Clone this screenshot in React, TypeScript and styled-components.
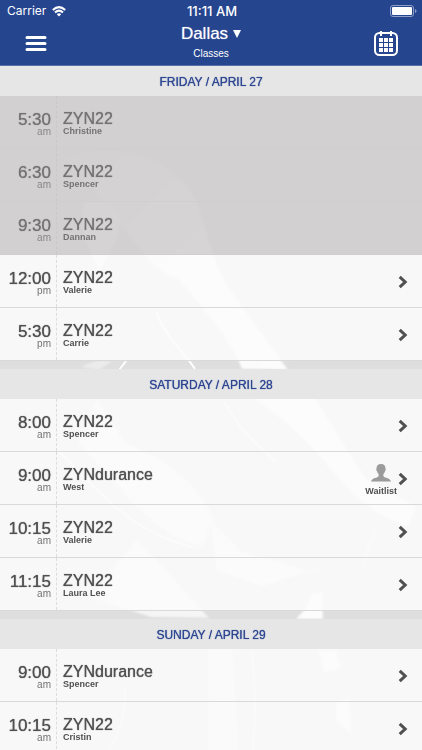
import React from "react";
import styled, { createGlobalStyle } from "styled-components";

const GlobalStyle = createGlobalStyle`
  * { box-sizing: border-box; }
  body {
    margin: 0;
    background: #dedede;
    font-family: "Liberation Sans", Arial, sans-serif;
    overflow-x: hidden;
  }
  button { font: inherit; color: inherit; border: 0; padding: 0; background: none; cursor: pointer; }
`;

const Screen = styled.div`
  position: relative;
  height: 100vh;
  overflow: hidden;
  display: flex;
  flex-direction: column;
`;

const Backdrop = styled.svg`
  position: absolute;
  inset: 0;
  width: 100%;
  height: 100%;
`;

const Header = styled.header`
  position: relative;
  flex: none;
  background: #26458f;
  border-bottom: 1px solid #5870aa;
  color: #fff;
`;

const StatusBar = styled.div`
  display: grid;
  grid-template-columns: 1fr auto 1fr;
  align-items: center;
  height: 22px;
  padding: 0 5px 0 7px;
  font-family: Inter, sans-serif;
  font-size: 12px;
  line-height: 22px;
`;

const Carrier = styled.div`
  display: flex;
  align-items: center;
  gap: 6px;
`;

const Clock = styled.time`
  font-size: 13px;
  font-weight: 500;
`;

const Battery = styled.svg`
  justify-self: end;
`;

const NavBar = styled.div`
  display: grid;
  grid-template-columns: 72px 1fr 72px;
  height: 43px;
`;

const IconButton = styled.button`
  display: flex;
  align-items: center;
  justify-content: center;
`;

const Titles = styled.div`
  display: flex;
  flex-direction: column;
  align-items: center;
`;

const CityButton = styled.button`
  display: flex;
  align-items: center;
  gap: 5px;
  font-size: 17px;
  line-height: 24px;
  text-shadow: 0 0 1px #ffffff99;
`;

const Subtitle = styled.span`
  font-size: 10px;
  line-height: 16px;
`;

const Schedule = styled.main`
  position: relative;
  flex: 1;
  min-height: 0;
  overflow: hidden;
  display: flex;
  flex-direction: column;
  gap: 8px;
`;

const Day = styled.section`
  flex: none;
`;

const DayTitle = styled.h2`
  margin: 0;
  height: 30px;
  background: #e6e6e6;
  color: #2c4691;
  font-size: 12px;
  font-weight: 400;
  line-height: 32px;
  text-align: center;
  text-shadow: 0 0 1px #2c4691;
`;

const List = styled.ul`
  list-style: none;
  margin: 0;
  padding: 0;
`;

const Row = styled.button<{ $past?: boolean }>`
  display: grid;
  grid-template-columns: 57px 1fr auto auto;
  width: 100%;
  height: 53px;
  text-align: left;
  color: ${(p) => (p.$past ? "#747374" : "#505050")};
  background: ${(p) => (p.$past ? "rgba(208, 206, 207, 0.88)" : "rgba(252, 252, 252, 0.88)")};
  border-bottom: 1px solid ${(p) => (p.$past ? "#d0cecf" : "#d9d9d9")};
`;

const TimeCell = styled.span<{ $past?: boolean }>`
  display: flex;
  flex-direction: column;
  align-items: flex-end;
  padding: 15px 5px 0 0;
  border-right: 1px dashed ${(p) => (p.$past ? "#cac8c9" : "#dcdcdc")};
`;

const Hour = styled.span`
  font-size: 17px;
  line-height: 17px;
  text-shadow: 0 0 1px currentColor;
`;

const Meridiem = styled.span`
  font-size: 10px;
  line-height: 8px;
  opacity: 0.8;
`;

const ClassCell = styled.span`
  display: flex;
  flex-direction: column;
  padding: 14px 0 0 6px;
`;

const ClassName = styled.span`
  font-size: 16px;
  line-height: 17px;
  text-shadow: 0 0 1px currentColor;
`;

const SmallLabel = styled.span`
  font-size: 9px;
  font-weight: 700;
  line-height: 8px;
`;

const Waitlist = styled.span`
  display: flex;
  flex-direction: column;
  align-items: center;
  gap: 5px;
  padding-top: 12px;
`;

const ArrowCell = styled.span`
  display: flex;
  align-items: center;
  padding: 2px 14px 0 1px;
`;

type Session = { time: string; half: string; name: string; coach: string; past?: boolean; waitlist?: boolean };

const days: { title: string; sessions: Session[] }[] = [
  {
    title: "FRIDAY / APRIL 27",
    sessions: [
      { time: "5:30", half: "am", name: "ZYN22", coach: "Christine", past: true },
      { time: "6:30", half: "am", name: "ZYN22", coach: "Spencer", past: true },
      { time: "9:30", half: "am", name: "ZYN22", coach: "Dannan", past: true },
      { time: "12:00", half: "pm", name: "ZYN22", coach: "Valerie" },
      { time: "5:30", half: "pm", name: "ZYN22", coach: "Carrie" },
    ],
  },
  {
    title: "SATURDAY / APRIL 28",
    sessions: [
      { time: "8:00", half: "am", name: "ZYN22", coach: "Spencer" },
      { time: "9:00", half: "am", name: "ZYNdurance", coach: "West", waitlist: true },
      { time: "10:15", half: "am", name: "ZYN22", coach: "Valerie" },
      { time: "11:15", half: "am", name: "ZYN22", coach: "Laura Lee" },
    ],
  },
  {
    title: "SUNDAY / APRIL 29",
    sessions: [
      { time: "9:00", half: "am", name: "ZYNdurance", coach: "Spencer" },
      { time: "10:15", half: "am", name: "ZYN22", coach: "Cristin" },
    ],
  },
];

const RiderBackdrop = () => (
  <Backdrop viewBox="0 0 422 750" preserveAspectRatio="xMidYMid slice" aria-hidden="true">
    <defs>
      <linearGradient id="torso" x1="0" y1="0" x2="1" y2="1">
        <stop offset="0" stopColor="#fff" stopOpacity="0.1" />
        <stop offset="0.5" stopColor="#fff" stopOpacity="0.8" />
        <stop offset="1" stopColor="#fff" stopOpacity="0.9" />
      </linearGradient>
      <filter id="soft"><feGaussianBlur stdDeviation="1" /></filter>
    </defs>
    <g filter="url(#soft)" fill="#fff">
      <path d="M65 158 C120 140 178 160 196 202 C207 229 212 262 230 290 L288 370 L242 369 C229 335 200 305 178 279 C143 269 119 210 65 158Z" fill="url(#torso)" />
      <path d="M84 203 C98 194 115 205 119 220 C121 233 110 253 99 270 C91 251 78 233 84 203Z" opacity="0.75" />
      <path d="M80 367 L98 360 L112 361 L99 370Z" opacity="0.4" />
      <path d="M97 400 L125 443 C164 457 195 482 213 517 L203 546 C169 540 145 515 124 493 L78 442Z" opacity="0.6" />
      <path d="M242 392 L313 396 C331 423 349 456 367 480 L416 507 L408 526 C366 513 346 485 330 468 C305 437 276 410 242 392Z" opacity="0.9" />
      <path d="M137 540 L209 618 L151 617 L90 597Z" opacity="0.7" />
      <path d="M211 521 L241 552 L305 570 L263 586 L217 570Z" opacity="0.7" />
      <path d="M296 619 L306 608 L312 594 L322 592 L323 619Z" opacity="0.9" />
      <path d="M209 650 L232 650 L238 750 L208 750Z" opacity="0.5" />
      <path d="M319 651 L335 650 L341 668 L324 672Z M336 703 L349 698 L351 733 L337 722Z" opacity="0.8" />
    </g>
    <g fill="none" stroke="#fff" strokeWidth="2">
      <path d="M157 313 C163 334 185 353 195 369" />
      <path d="M126 361 L119 370" />
      <path d="M224 402 C238 425 251 442 276 461" opacity="0.6" />
      <path d="M58 450 C98 490 127 530 192 547" opacity="0.6" />
      <path d="M377 527 Q367 547 364 565 M259 582 Q299 575 318 569" opacity="0.5" />
      <path d="M125 690 Q126 724 109 750 M252 651 Q257 700 253 750" opacity="0.5" />
    </g>
  </Backdrop>
);

const Chevron = () => (
  <svg width="10" height="14" viewBox="0 0 10 14" aria-hidden="true">
    <path d="M1.7 1.8 7.2 7 1.7 12.2" fill="none" stroke="#505050" strokeWidth="3" />
  </svg>
);

const Person = () => (
  <svg width="20" height="18" viewBox="0 0 20 18" aria-hidden="true">
    <path fill="#9b9b9b" d="M10 0C6.9 0 5.4 2 5.5 4.7C5 5 5.2 6.6 5.9 7C6.2 8.3 6.8 9.2 7.6 9.9V12C6.8 14.5 1.1 13.2 0 17.5H20C18.9 13.2 13.2 14.5 12.4 12V9.9C13.2 9.2 13.8 8.3 14.1 7C14.8 6.6 15 5 14.5 4.7C14.6 2 13.1 0 10 0Z" />
  </svg>
);

export default function App() {
  return (
    <>
      <GlobalStyle />
      <Screen>
        <RiderBackdrop />
        <Header>
          <StatusBar>
            <Carrier>
              Carrier
              <svg width="14" height="11" viewBox="0 0 14 11" aria-hidden="true">
                <g fill="none" stroke="#fff" strokeWidth="2">
                  <path d="M.8 4Q7-1.8 13.2 4" />
                  <path d="M3 6.5Q7 2.8 11 6.5" />
                </g>
                <path d="M4.8 8.2Q7 6.3 9.2 8.2L7 10.6Z" fill="#fff" />
              </svg>
            </Carrier>
            <Clock>11:11 AM</Clock>
            <Battery width="27" height="12" viewBox="0 0 27 12" aria-label="Battery full" role="img">
              <rect x=".5" y=".5" width="23" height="11" rx="2.5" fill="none" stroke="#8f9fc7" />
              <rect x="2" y="2" width="20" height="8" rx="1" fill="#fff" />
              <path d="M25 4Q26.5 4.5 26.5 6T25 8Z" fill="#8f9fc7" />
            </Battery>
          </StatusBar>
          <NavBar>
            <IconButton aria-label="Menu">
              <svg width="22" height="17" viewBox="0 0 22 17" aria-hidden="true">
                <path d="M2 2.5H20M2 8.5H20M2 14.5H20" stroke="#fff" strokeWidth="3" strokeLinecap="round" />
              </svg>
            </IconButton>
            <Titles>
              <CityButton>
                Dallas
                <svg width="8" height="8" viewBox="0 0 8 8" aria-hidden="true"><path d="M0 0H8L4 8Z" fill="#fff" /></svg>
              </CityButton>
              <Subtitle>Classes</Subtitle>
            </Titles>
            <IconButton aria-label="Calendar">
              <svg width="24" height="26" viewBox="0 0 24 26" aria-hidden="true">
                <rect x="1" y="2" width="22" height="22" rx="4.5" fill="none" stroke="#fff" strokeWidth="2" />
                <path d="M7 0V5M17 0V5" stroke="#fff" strokeWidth="2" />
                <path fill="#fff" d="M5 7h4v4H5ZM10 7h4v4h-4ZM15 7h4v4h-4ZM5 12h4v4H5ZM10 12h4v4h-4ZM15 12h4v4h-4ZM5 17h4v4H5ZM10 17h4v4h-4ZM15 17h4v4h-4Z" />
              </svg>
            </IconButton>
          </NavBar>
        </Header>
        <Schedule>
          {days.map((day) => (
            <Day key={day.title}>
              <DayTitle>{day.title}</DayTitle>
              <List>
                {day.sessions.map((s) => (
                  <li key={s.time + s.half}>
                    <Row $past={s.past} disabled={s.past}>
                      <TimeCell $past={s.past}>
                        <Hour>{s.time}</Hour>
                        <Meridiem>{s.half}</Meridiem>
                      </TimeCell>
                      <ClassCell>
                        <ClassName>{s.name}</ClassName>
                        <SmallLabel>{s.coach}</SmallLabel>
                      </ClassCell>
                      {s.waitlist ? (
                        <Waitlist>
                          <Person />
                          <SmallLabel>Waitlist</SmallLabel>
                        </Waitlist>
                      ) : (
                        <span />
                      )}
                      {s.past ? <span /> : <ArrowCell><Chevron /></ArrowCell>}
                    </Row>
                  </li>
                ))}
              </List>
            </Day>
          ))}
        </Schedule>
      </Screen>
    </>
  );
}
